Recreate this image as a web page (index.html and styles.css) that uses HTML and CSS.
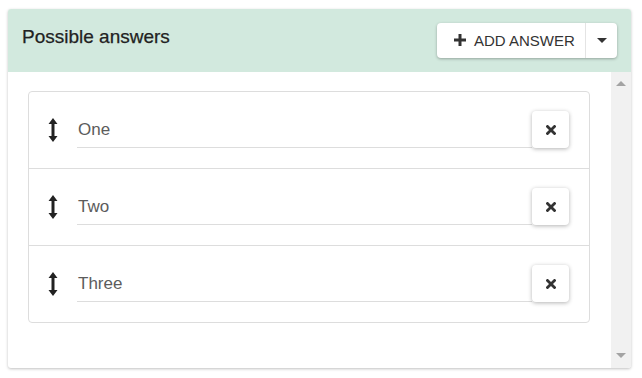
FILE: index.html
```html
<!DOCTYPE html>
<html>
<head>
<meta charset="utf-8">
<link rel="stylesheet" href="styles.css">
</head>
<body>
<div class="card">
  <div class="card-header">
    <h2 class="title">Possible answers</h2>
    <div class="split-btn">
      <button class="btn-main">
        <svg class="plus" viewBox="0 0 12 12" width="12" height="12"><path d="M4.5 0h3v4.5H12v3H7.5V12h-3V7.5H0v-3h4.5z" fill="#333"/></svg>
        <span>ADD ANSWER</span>
      </button>
      <button class="btn-caret">
        <svg viewBox="0 0 10 5" width="10" height="5"><path d="M0 0h10L5 5z" fill="#333"/></svg>
      </button>
    </div>
  </div>
  <div class="card-body">
    <div class="content">
      <ul class="answers">
        <li class="answer">
          <svg class="drag" viewBox="0 0 10 24" width="10" height="24"><path d="M5 0L9.5 6H6.5V18H9.5L5 24L0.5 18H3.5V6H0.5z" fill="#222"/></svg>
          <div class="field"><span class="value">One</span></div>
          <button class="del"><svg viewBox="0 0 10 10" width="10" height="10"><path d="M1.5 1.5L8.5 8.5M8.5 1.5L1.5 8.5" stroke="#333" stroke-width="2.8" stroke-linecap="square"/></svg></button>
        </li>
        <li class="answer">
          <svg class="drag" viewBox="0 0 10 24" width="10" height="24"><path d="M5 0L9.5 6H6.5V18H9.5L5 24L0.5 18H3.5V6H0.5z" fill="#222"/></svg>
          <div class="field"><span class="value">Two</span></div>
          <button class="del"><svg viewBox="0 0 10 10" width="10" height="10"><path d="M1.5 1.5L8.5 8.5M8.5 1.5L1.5 8.5" stroke="#333" stroke-width="2.8" stroke-linecap="square"/></svg></button>
        </li>
        <li class="answer">
          <svg class="drag" viewBox="0 0 10 24" width="10" height="24"><path d="M5 0L9.5 6H6.5V18H9.5L5 24L0.5 18H3.5V6H0.5z" fill="#222"/></svg>
          <div class="field"><span class="value">Three</span></div>
          <button class="del"><svg viewBox="0 0 10 10" width="10" height="10"><path d="M1.5 1.5L8.5 8.5M8.5 1.5L1.5 8.5" stroke="#333" stroke-width="2.8" stroke-linecap="square"/></svg></button>
        </li>
      </ul>
    </div>
    <div class="scrollbar">
      <svg viewBox="0 0 10 5" width="10" height="5"><path d="M0 5h10L5 0z" fill="#a3a3a3"/></svg>
      <svg viewBox="0 0 10 5" width="10" height="5"><path d="M0 0h10L5 5z" fill="#a3a3a3"/></svg>
    </div>
  </div>
</div>
</body>
</html>
```

FILE: styles.css
```css
html, body {
  margin: 0;
  padding: 0;
  background: #fff;
}
body {
  padding: 9px 10px 10px 8px;
  font-family: "Liberation Sans", Arial, sans-serif;
}
.card {
  width: 623px;
  height: 359px;
  border-radius: 3px;
  box-shadow: 0 1px 3px rgba(0,0,0,0.25);
  display: flex;
  flex-direction: column;
  overflow: hidden;
  background: #fff;
}
.card-header {
  height: 63px;
  flex: none;
  background: #d2e9de;
  display: flex;
  align-items: center;
  justify-content: space-between;
  padding: 0 14px 0 14px;
  box-sizing: border-box;
}
.title {
  margin: 0 0 7px 0;
  font-size: 19px;
  font-weight: 500;
  color: #222;
  -webkit-text-stroke: 0.25px #222;
}
.split-btn {
  display: flex;
  height: 35px;
  background: #fff;
  border-radius: 4px;
  box-shadow: 0 1px 3px rgba(0,0,0,0.3);
  margin-bottom: 1px;
}
.split-btn button {
  border: 0;
  background: transparent;
  font-family: inherit;
  padding: 0;
  display: flex;
  align-items: center;
}
.btn-main {
  width: 149px;
  padding-left: 17px !important;
  gap: 8px;
  font-size: 15px;
  color: #333;
  border-right: 1px solid #e4e4e4 !important;
}
.btn-caret {
  width: 31px;
  justify-content: center;
}
.card-body {
  flex: 1;
  display: flex;
  min-height: 0;
}
.content {
  flex: 1;
  padding: 19px 19px 20px 20px;
}
.scrollbar {
  width: 20px;
  flex: none;
  background: #f1f1f1;
  display: flex;
  flex-direction: column;
  justify-content: space-between;
  align-items: center;
  padding: 9px 0 10px 0;
  box-sizing: border-box;
}
.answers {
  list-style: none;
  margin: 0;
  padding: 0;
  border: 1px solid #ddd;
  border-radius: 4px;
  width: 560px;
}
.answer {
  display: flex;
  align-items: center;
  padding: 19px 20px 20px 19px;
  border-top: 1px solid #ddd;
}
.answer:first-child {
  border-top: 0;
}
.drag {
  flex: none;
}
.field {
  flex: 1;
  height: 37px;
  margin-left: 19px;
  border-bottom: 1px solid #ddd;
  box-sizing: border-box;
  display: flex;
  align-items: center;
  padding-top: 1px;
}
.value {
  font-size: 17px;
  color: #5c5c5c;
  margin-left: 1px;
}
.del {
  flex: none;
  width: 37px;
  height: 37px;
  border: 0;
  background: #fff;
  border-radius: 4px;
  box-shadow: 0 1px 4px rgba(0,0,0,0.3);
  display: flex;
  align-items: center;
  justify-content: center;
  padding: 0;
}
```
